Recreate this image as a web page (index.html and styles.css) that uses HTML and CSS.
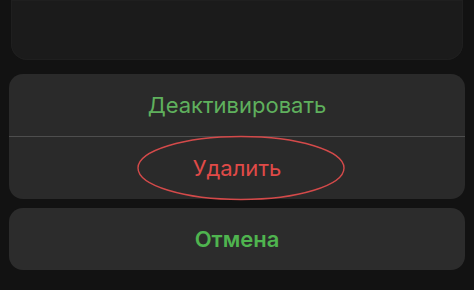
FILE: index.html
```html
<!DOCTYPE html>
<html lang="ru">
<head>
<meta charset="utf-8">
<link rel="stylesheet" href="styles.css">
</head>
<body>
<div class="sheet">
  <div class="top-card"></div>
  <div class="group">
    <div class="action green">Деактивировать</div>
    <div class="divider"></div>
    <div class="action red">
      <span>Удалить</span>
      <svg class="ring" width="210" height="66" viewBox="0 0 210 66">
        <ellipse cx="105" cy="33" rx="103" ry="31.5" fill="none" stroke="#d44a4a" stroke-width="1.4"/>
      </svg>
    </div>
  </div>
  <div class="cancel">Отмена</div>
</div>
</body>
</html>
```
FILE: styles.css
```css
html, body {
  margin: 0;
  padding: 0;
  background: #121212;
}
body {
  width: 474px;
  height: 290px;
  overflow: hidden;
  font-family: Inter, "Noto Sans", sans-serif;
}
.sheet {
  display: flex;
  flex-direction: column;
}
.top-card {
  height: 60px;
  margin: 0 11px;
  background: #1b1b1b;
  border-radius: 0 0 16px 16px;
  box-shadow: inset 0 0 0 1px #1f1f1f;
}
.group {
  margin: 14px 9px 0;
  background: #2a2a2a;
  border-radius: 14px;
  display: flex;
  flex-direction: column;
}
.action {
  height: 62px;
  display: flex;
  align-items: center;
  justify-content: center;
  font-size: 22px;
  position: relative;
}
.action.green {
  color: #5fb05d;
}
.action.red {
  color: #e04a48;
}
.divider {
  height: 1px;
  background: #4e4e4e;
}
.ring {
  position: absolute;
  left: 127px;
  top: -2px;
}
.cancel {
  margin: 9px 9px 0;
  height: 62px;
  background: #2c2c2c;
  border-radius: 14px;
  display: flex;
  align-items: center;
  justify-content: center;
  color: #4fb44f;
  font-size: 22px;
  font-weight: 600;
}
```
